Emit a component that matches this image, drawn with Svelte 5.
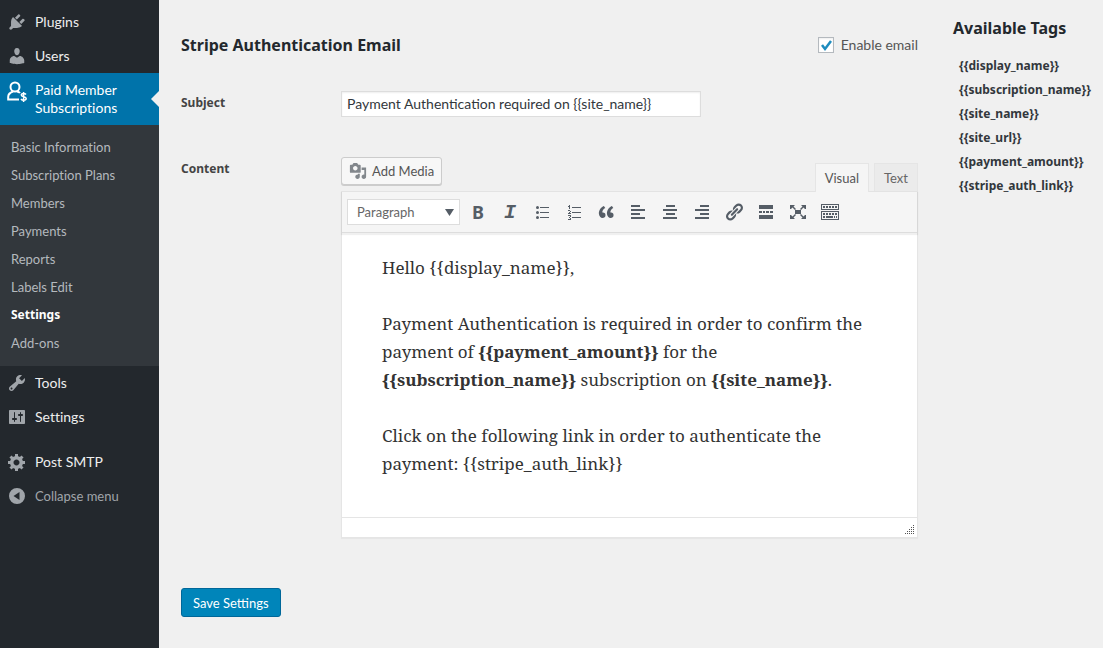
<script lang="ts">
  type MenuItem = { label: string; icon: string };

  const topMenu: MenuItem[] = [
    { label: 'Plugins', icon: 'plugins' },
    { label: 'Users', icon: 'users' }
  ];

  const subMenu = [
    'Basic Information',
    'Subscription Plans',
    'Members',
    'Payments',
    'Reports',
    'Labels Edit',
    'Settings',
    'Add-ons'
  ];

  const bottomMenu: MenuItem[] = [
    { label: 'Tools', icon: 'tools' },
    { label: 'Settings', icon: 'settings' }
  ];

  const tags = [
    '{{display_name}}',
    '{{subscription_name}}',
    '{{site_name}}',
    '{{site_url}}',
    '{{payment_amount}}',
    '{{stripe_auth_link}}'
  ];

  const icons: Record<string, string> = {
    plugins: 'M13.11 4.36L9.87 7.6 8 5.73l3.24-3.24c.35-.34 1.05-.2 1.56.32.52.51.66 1.21.31 1.55zm-8 1.77l.91-1.12 9.01 9.01-1.19.84c-.71.71-2.63 1.16-3.82 1.16H6.14L4.9 17.26c-.59.59-1.54.59-2.12 0-.59-.58-.59-1.53 0-2.12l1.24-1.24v-3.88c0-1.13.4-3.19 1.09-3.89zm7.26 3.97l3.24-3.24c.34-.35 1.04-.21 1.55.31.52.51.66 1.21.31 1.55l-3.24 3.25z',
    users: 'M10 9.25c-2.27 0-2.73-3.44-2.73-3.44C7 4.02 7.82 2 9.97 2c2.16 0 2.98 2.02 2.71 3.81 0 0-.41 3.44-2.68 3.44zm0 2.57L12.72 10c2.39 0 4.52 2.33 4.52 4.53v2.49s-3.65 1.13-7.24 1.13c-3.65 0-7.24-1.13-7.24-1.13v-2.49c0-2.25 1.94-4.48 4.47-4.48z',
    tools: 'M16.68 9.77c-1.34 1.34-3.3 1.67-4.95.99l-5.41 6.52c-.99.99-2.59.99-3.58 0s-.99-2.59 0-3.57l6.52-5.42c-.68-1.65-.35-3.61.99-4.95 1.28-1.28 3.12-1.62 4.72-1.06l-2.89 2.89 2.82 2.82 2.86-2.87c.53 1.58.18 3.39-1.08 4.65zM3.81 16.21c.4.39 1.04.39 1.43 0 .4-.4.4-1.04 0-1.43-.39-.4-1.03-.4-1.43 0-.39.39-.39 1.03 0 1.43z',
    settings: 'M18 16V4c0-.55-.45-1-1-1H3c-.55 0-1 .45-1 1v12c0 .55.45 1 1 1h14c.55 0 1-.45 1-1zM8 11h1c.55 0 1 .45 1 1s-.45 1-1 1H8v1.5c0 .28-.22.5-.5.5s-.5-.22-.5-.5V13H6c-.55 0-1-.45-1-1s.45-1 1-1h1V5.5c0-.28.22-.5.5-.5s.5.22.5.5V11zm5-2h-1c-.55 0-1-.45-1-1s.45-1 1-1h1V5.5c0-.28.22-.5.5-.5s.5.22.5.5V7h1c.55 0 1 .45 1 1s-.45 1-1 1h-1v5.5c0 .28-.22.5-.5.5s-.5-.22-.5-.5V9z',
    gear: 'M18 12h-2.18c-.17.7-.44 1.35-.81 1.93l1.54 1.54-2.1 2.1-1.54-1.54c-.58.36-1.23.63-1.91.79V19H8v-2.18c-.68-.16-1.33-.43-1.91-.79l-1.54 1.54-2.12-2.12 1.54-1.54c-.36-.58-.63-1.23-.79-1.91H1V9.03h2.17c.16-.7.44-1.35.8-1.94L2.43 5.55l2.1-2.1 1.54 1.54c.58-.37 1.24-.64 1.93-.81V2h3v2.18c.68.16 1.33.43 1.91.79l1.54-1.54 2.12 2.12-1.54 1.54c.36.59.64 1.24.8 1.94H18V12zm-8.5 1.5c1.66 0 3-1.34 3-3s-1.34-3-3-3-3 1.34-3 3 1.34 3 3 3z',
    collapse: 'M10 2a8 8 0 1 0 0 16 8 8 0 0 0 0-16zm2.5 4v8L6.5 10z',
    media: 'M13 11V4c0-.55-.45-1-1-1h-1.67L9 1H5L3.67 3H2c-.55 0-1 .45-1 1v7c0 .55.45 1 1 1h10c.55 0 1-.45 1-1zM7 4.5c1.38 0 2.5 1.12 2.5 2.5S8.38 9.5 7 9.5 4.5 8.38 4.5 7 5.62 4.5 7 4.5zM14 6h5v10.5c0 1.38-1.12 2.5-2.5 2.5S14 17.88 14 16.5s1.12-2.5 2.5-2.5c.17 0 .34.02.5.05V9h-3V6zm-4 8.05V13h2v3.5c0 1.38-1.12 2.5-2.5 2.5S7 17.88 7 16.5 8.12 14 9.5 14c.17 0 .34.02.5.05z',
    ul: 'M4 5.5a1.5 1.5 0 1 0 3 0a1.5 1.5 0 1 0-3 0zm0 5a1.5 1.5 0 1 0 3 0a1.5 1.5 0 1 0-3 0zm0 5a1.5 1.5 0 1 0 3 0a1.5 1.5 0 1 0-3 0zM8 5h9v1H8zm0 5h9v1H8zm0 5h9v1H8z',
    ol: 'M8 5h9v1H8zm0 5h9v1H8zm0 5h9v1H8zM5 3h1v4H5zM4 4h1v1H4zM4 8h2v1H4zm2 1h1v1H6zm-1 1h1v1H5zm-1 1h3v1H4zM4 13h3v1H4zm2 1h1v1H6zm-1 1h1v1H5zm1 1h1v1H6zm-2 1h3v1H4z',
    quote: 'M9.49 13.22c0-.74-.2-1.38-.61-1.9-.62-.78-1.83-.88-2.53-.72-.29-1.65 1.11-3.75 2.92-4.65L7.88 4c-2.73 1.3-5.42 4.28-4.96 8.05C3.21 14.43 4.59 16 6.54 16c.85 0 1.56-.25 2.12-.75s.83-1.18.83-2.03zm8.05 0c0-.74-.2-1.38-.61-1.9-.63-.78-1.83-.88-2.53-.72-.29-1.65 1.11-3.75 2.92-4.65L15.93 4c-2.73 1.3-5.41 4.28-4.95 8.05.29 2.38 1.66 3.95 3.61 3.95.85 0 1.56-.25 2.12-.75s.83-1.18.83-2.03z',
    left: 'M3 3h9v2H3zm0 4h14v2H3zm0 4h9v2H3zm0 4h14v2H3z',
    center: 'M6 3h9v2H6zM3 7h14v2H3zm3 4h9v2H6zm-3 4h14v2H3z',
    right: 'M8 3h9v2H8zM3 7h14v2H3zm5 4h9v2H8zm-5 4h14v2H3z',
    link: 'M17.74 2.76c1.68 1.69 1.68 4.41 0 6.1l-1.53 1.52c-1.12 1.12-2.7 1.47-4.14 1.09l2.62-2.61.76-.77.76-.76c.84-.84.84-2.2 0-3.04-.84-.85-2.2-.85-3.04 0l-.77.76-3.38 3.38c-.37-1.44-.02-3.02 1.1-4.14l1.52-1.53c1.69-1.68 4.42-1.68 6.1 0zM8.59 13.43l5.34-5.34c.42-.42.42-1.1 0-1.52-.44-.43-1.13-.39-1.53 0l-5.33 5.34c-.42.42-.42 1.1 0 1.52.44.43 1.13.39 1.52 0zm-.76 2.29l4.14-4.15c.38 1.44.03 3.02-1.09 4.14l-1.52 1.53c-1.69 1.68-4.41 1.68-6.1 0-1.68-1.68-1.68-4.42 0-6.1l1.53-1.52c1.12-1.12 2.7-1.47 4.14-1.1l-4.14 4.15c-.85.84-.85 2.2 0 3.05.84.84 2.2.84 3.04 0z',
    more: 'M3 3h14v4H3zm0 6h3v2H3zm4 0h2v2H7zm3 0h3v2h-3zm4 0h3v2h-3zM3 13h14v4H3z',
    full: 'M7 8h6v4H7zM2 3h5L5.5 4.5 8 7 7 8 4.5 5.5 3 7H2zm16 0h-5l1.5 1.5L12 7l1 1 2.5-2.5L17 7h1zM2 17h5l-1.5-1.5L8 13l-1-1-2.5 2.5L3 13H2zm16 0h-5l1.5-1.5L12 13l1-1 2.5 2.5L17 13h1z',
    keyboard: 'M1 2h18v6H1zm1 1v4h16V3zM1 9h18v9H1zm1 1v7h16v-7zM3 4h2v2H3zm3 0h2v2H6zm3 0h2v2H9zm3 0h2v2h-2zm3 0h2v2h-2zM3 11h2v2H3zm3 0h2v2H6zm3 0h2v2H9zm3 0h2v2h-2zm3 0h2v2h-2zM3 14h2v2H3zm3 0h7v2H6zm8 0h1v2h-1zm2 0h1v2h-1z'
  };

  const tools = [
    { name: 'ul', title: 'Bulleted list' },
    { name: 'ol', title: 'Numbered list' },
    { name: 'quote', title: 'Blockquote' },
    { name: 'left', title: 'Align left' },
    { name: 'center', title: 'Align center' },
    { name: 'right', title: 'Align right' },
    { name: 'link', title: 'Insert link' },
    { name: 'more', title: 'Insert Read More tag' },
    { name: 'full', title: 'Fullscreen' },
    { name: 'keyboard', title: 'Toolbar toggle' }
  ];

  let enabled = $state(true);
  let subject = $state('Payment Authentication required on {{site_name}}');
</script>

{#snippet icon(name: string)}
  <svg class="icon" viewBox="0 0 20 20" aria-hidden="true">
    <path fill-rule="evenodd" d={icons[name]} />
  </svg>
{/snippet}

{#snippet menuLink(item: MenuItem)}
  <a class="menu-link" href="#{item.icon}">
    {@render icon(item.icon)}
    <span>{item.label}</span>
  </a>
{/snippet}

<div class="admin">
  <nav class="sidebar">
    {#each topMenu as item}
      {@render menuLink(item)}
    {/each}

    <a class="menu-link current" href="#subscriptions">
      <svg class="member-icon" viewBox="0 0 20 20" aria-hidden="true">
        <circle cx="8" cy="6" r="4.5" />
        <path d="M12 18.5H1.2V16c0-3 2-4.5 4.8-5.5M10 10.5c1.5.2 2.5.8 3 1.5" />
        <path class="dollar" d="M19 13.5c-.6-.8-1.5-1-2.5-1-1.3 0-2.2.6-2.2 1.6 0 2.3 4.9 1 4.9 3.4 0 1-1 1.7-2.5 1.7-1.2 0-2.1-.4-2.7-1.2M16.6 11v10" />
      </svg>
      <span>Paid Member Subscriptions</span>
    </a>
    <ul class="submenu">
      {#each subMenu as label}
        <li><a href="#{label}" class:active={label === 'Settings'}>{label}</a></li>
      {/each}
    </ul>

    {#each bottomMenu as item}
      {@render menuLink(item)}
    {/each}
    <div class="separator"></div>
    {@render menuLink({ label: 'Post SMTP', icon: 'gear' })}
    <button class="menu-link collapse" type="button">
      {@render icon('collapse')}
      <span>Collapse menu</span>
    </button>
  </nav>

  <main class="content">
    <form class="email-form">
      <header class="form-header">
        <h2>Stripe Authentication Email</h2>
        <label class="enable">
          <input type="checkbox" bind:checked={enabled} />
          Enable email
        </label>
      </header>

      <div class="row subject-row">
        <label for="subject">Subject</label>
        <input id="subject" class="subject" type="text" bind:value={subject} />
      </div>

      <div class="row">
        <span class="row-label" id="content-label">Content</span>
        <div class="editor-wrap">
          <div class="editor-top">
            <button class="add-media" type="button">
              {@render icon('media')}
              Add Media
            </button>
            <div class="tabs">
              <button class="tab selected" type="button">Visual</button>
              <button class="tab" type="button">Text</button>
            </div>
          </div>
          <div class="editor">
            <div class="toolbar">
              <select class="format" aria-label="Format">
                <option>Paragraph</option>
                <option>Heading 1</option>
                <option>Heading 2</option>
              </select>
              <button class="tool bold" type="button" title="Bold">B</button>
              <button class="tool italic" type="button" title="Italic">I</button>
              {#each tools as tool}
                <button class="tool" type="button" title={tool.title}>{@render icon(tool.name)}</button>
              {/each}
            </div>
            <div class="text-area" contenteditable="true" role="textbox" tabindex="0" aria-labelledby="content-label">
              <p>Hello {'{{display_name}}'},</p>
              <p>
                Payment Authentication is required in order to confirm the payment of
                <strong>{'{{payment_amount}}'}</strong> for the
                <strong>{'{{subscription_name}}'}</strong> subscription on
                <strong>{'{{site_name}}'}</strong>.
              </p>
              <p>Click on the following link in order to authenticate the payment: {'{{stripe_auth_link}}'}</p>
            </div>
            <div class="statusbar">
              <svg class="grip" viewBox="0 0 10 10" aria-hidden="true">
                <path d="M8 0h1v1H8zM6 2h1v1H6zm2 0h1v1H8zM4 4h1v1H4zm2 0h1v1H6zm2 0h1v1H8zM2 6h1v1H2zm2 0h1v1H4zm2 0h1v1H6zm2 0h1v1H8zM0 8h1v1H0zm2 0h1v1H2zm2 0h1v1H4zm2 0h1v1H6zm2 0h1v1H8z" />
              </svg>
            </div>
          </div>
        </div>
      </div>

      <button class="save" type="button">Save Settings</button>
    </form>

    <aside class="tags">
      <h2>Available Tags</h2>
      <ul>
        {#each tags as tag}
          <li>{tag}</li>
        {/each}
      </ul>
    </aside>
  </main>
</div>

<style>
  :global(body) {
    background: #f0f0f0;
    color: #444;
    font-family: Lato, 'Noto Sans', sans-serif;
    font-size: 13px;
    font-variant-ligatures: none;
    line-height: 18px;
  }

  ul {
    list-style: none;
    margin: 0;
    padding: 0;
  }

  h2 {
    margin: 0;
    color: #23282d;
    font-family: 'Noto Sans', sans-serif;
    font-size: 16px;
    line-height: 24px;
  }

  button,
  input,
  select {
    box-sizing: border-box;
    font-family: inherit;
    margin: 0;
  }

  .icon {
    width: 20px;
    height: 20px;
    flex: none;
    fill: currentColor;
  }

  .admin {
    display: flex;
    min-height: 100vh;
  }

  .sidebar {
    flex: none;
    width: 159px;
    box-sizing: border-box;
    padding-top: 5px;
    background: #23282d;
  }

  .menu-link {
    display: flex;
    align-items: center;
    gap: 8px;
    box-sizing: border-box;
    width: 100%;
    min-height: 34px;
    padding: 8px 8px 8px 7px;
    border: 0;
    background: none;
    color: #eee;
    font-size: 14px;
    line-height: 18px;
    text-align: left;
    text-decoration: none;
  }

  .menu-link .icon {
    margin: -1px 0;
    color: #a0a5aa;
  }

  .current {
    position: relative;
    align-items: flex-start;
    background: #0073aa;
    color: #fff;
  }

  /* notch pointing at the open page */
  .current::after {
    content: '';
    position: absolute;
    right: 0;
    top: 18px;
    border: 8px solid transparent;
    border-right-color: #f0f0f0;
    border-left: 0;
  }

  .member-icon {
    flex: none;
    width: 20px;
    height: 20px;
    overflow: visible;
    fill: none;
    stroke: #fff;
    stroke-width: 2;
  }

  .member-icon .dollar {
    stroke-width: 1.5;
  }

  .submenu {
    padding: 8px 0 9px;
    background: #32373c;
  }

  .submenu a {
    display: block;
    padding: 5px 11px;
    color: #b4b9be;
    text-decoration: none;
  }

  .submenu .active {
    color: #fff;
    font-family: 'Noto Sans', sans-serif;
    font-size: 12px;
    font-weight: bold;
  }

  .separator {
    height: 11px;
  }

  .collapse {
    color: #a0a5aa;
    font-size: 13px;
  }

  .content {
    flex: 1;
    min-width: 0;
    display: grid;
    grid-template-columns: minmax(0, 1fr) 150px;
    gap: 35px;
    padding-left: 22px;
  }

  .email-form {
    padding: 33px 0 32px;
  }

  .form-header {
    display: flex;
    align-items: center;
    justify-content: space-between;
  }

  .enable {
    display: flex;
    align-items: center;
    gap: 7px;
    color: #555;
    font-size: 14px;
  }

  .enable input {
    appearance: none;
    width: 16px;
    height: 16px;
    border: 1px solid #b4b9be;
    background: #fff;
    box-shadow: inset 0 1px 2px rgba(0, 0, 0, 0.07);
  }

  .enable input:checked {
    background: #fff url("data:image/svg+xml,%3Csvg xmlns='http://www.w3.org/2000/svg' viewBox='0 0 14 14'%3E%3Cpath d='M3 7l3 4 6-8' fill='none' stroke='%231e8cbe' stroke-width='2.5'/%3E%3C/svg%3E") center / 14px no-repeat;
  }

  .row {
    display: grid;
    grid-template-columns: 160px minmax(0, 1fr);
  }

  .subject-row {
    margin: 34px 0 40px;
  }

  .row > label,
  .row-label {
    padding-top: 3px;
    font-family: 'Noto Sans', sans-serif;
    font-size: 12px;
    font-weight: bold;
  }

  .subject {
    width: 360px;
    max-width: 100%;
    height: 26px;
    padding: 2px 5px 4px;
    border: 1px solid #ddd;
    background: #fff;
    box-shadow: inset 0 1px 2px rgba(0, 0, 0, 0.07);
    color: #32373c;
    font-size: 14px;
  }

  .editor-top {
    display: flex;
    align-items: flex-start;
    justify-content: space-between;
    height: 34px;
  }

  .add-media {
    display: flex;
    align-items: center;
    gap: 5px;
    height: 28px;
    padding: 0 7px;
    border: 1px solid #ccc;
    border-radius: 3px;
    background: #f7f7f7;
    box-shadow: 0 1px 0 #ccc;
    color: #555;
    font-size: 13px;
  }

  .add-media .icon {
    width: 18px;
    height: 18px;
    color: #82878c;
  }

  .tabs {
    display: flex;
    align-self: flex-end;
    gap: 5px;
  }

  .tab {
    height: 28px;
    padding: 0 9px;
    border: 1px solid #e5e5e5;
    border-bottom: 0;
    background: #ebebeb;
    color: #666;
    font-size: 13px;
  }

  /* the open tab covers the editor's top border */
  .selected {
    position: relative;
    height: 29px;
    margin-bottom: -1px;
    background: #f5f5f5;
    color: #555;
  }

  .editor {
    border: 1px solid #e5e5e5;
    background: #fff;
    box-shadow: 0 1px 1px rgba(0, 0, 0, 0.04);
  }

  .toolbar {
    display: flex;
    align-items: center;
    gap: 4px;
    height: 40px;
    padding-left: 5px;
    border-bottom: 1px solid #ddd;
    background: #f5f5f5;
    box-shadow: 0 1px 1px 1px rgba(0, 0, 0, 0.06);
  }

  .format {
    appearance: none;
    width: 113px;
    height: 26px;
    padding: 0 9px;
    border: 1px solid #ddd;
    border-radius: 0;
    background: #fff url("data:image/svg+xml,%3Csvg xmlns='http://www.w3.org/2000/svg' viewBox='0 0 9 7'%3E%3Cpath d='M0 0h9L4.5 7z' fill='%23555d66'/%3E%3C/svg%3E") right 5px center / 9px 7px no-repeat;
    color: #666;
    font-size: 13px;
  }

  .tool {
    display: flex;
    align-items: center;
    justify-content: center;
    width: 28px;
    height: 28px;
    padding: 0;
    border: 0;
    background: none;
    color: #555d66;
    font-size: 18px;
    font-weight: bold;
  }

  .bold {
    font-family: 'Noto Sans', sans-serif;
  }

  .italic {
    font-family: 'Liberation Mono', monospace;
    font-size: 20px;
    font-style: italic;
  }

  .text-area {
    padding: 21px 40px 39px;
    color: #333;
    font-family: 'Noto Serif', 'DejaVu Serif Condensed', serif;
    font-size: 17px;
    line-height: 28px;
    outline: none;
  }

  .text-area p {
    margin: 0 0 28px;
  }

  .text-area p:last-child {
    margin: 0;
  }

  .statusbar {
    display: flex;
    align-items: flex-end;
    justify-content: flex-end;
    box-sizing: border-box;
    height: 20px;
    padding: 2px;
    border-top: 1px solid #e5e5e5;
  }

  .grip {
    width: 10px;
    height: 10px;
    fill: #555;
  }

  .save {
    height: 29px;
    margin-top: 50px;
    padding: 0 11px;
    border: 1px solid #006799;
    border-radius: 3px;
    background: #0085ba;
    color: #fff;
    font-size: 13px;
  }

  .tags {
    padding-top: 16px;
  }

  .tags ul {
    padding: 14px 0 0 6px;
  }

  .tags li {
    color: #32373c;
    font-family: 'Noto Sans', sans-serif;
    font-size: 12px;
    font-weight: bold;
    line-height: 24px;
  }
</style>
